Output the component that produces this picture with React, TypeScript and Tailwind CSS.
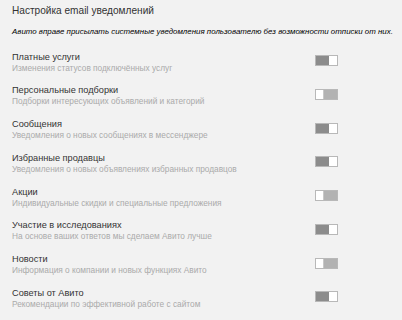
import React from "react";

const rows: { t: string; s: string; on: boolean }[] = [
  { t: "Платные услуги", s: "Изменения статусов подключённых услуг", on: true },
  { t: "Персональные подборки", s: "Подборки интересующих объявлений и категорий", on: false },
  { t: "Сообщения", s: "Уведомления о новых сообщениях в мессенджере", on: true },
  { t: "Избранные продавцы", s: "Уведомления о новых объявлениях избранных продавцов", on: true },
  { t: "Акции", s: "Индивидуальные скидки и специальные предложения", on: false },
  { t: "Участие в исследованиях", s: "На основе ваших ответов мы сделаем Авито лучше", on: true },
  { t: "Новости", s: "Информация о компании и новых функциях Авито", on: false },
  { t: "Советы от Авито", s: "Рекомендации по эффективной работе с сайтом", on: true },
];

function Toggle({ on }: { on: boolean }) {
  return (
    <div className="flex h-[11px] w-[23px] border border-[#b8b8b8] bg-white">
      {on ? (
        <>
          <div className="h-full w-[13px] bg-[#8c8c8c]" />
          <div className="h-full flex-1 bg-white" />
        </>
      ) : (
        <>
          <div className="h-full w-[8px] bg-white border-r border-[#c8c8c8]" />
          <div className="h-full flex-1 bg-[#b2b2b2]" />
        </>
      )}
    </div>
  );
}

export default function App() {
  return (
    <div
      className="h-[320px] w-[402px] overflow-hidden bg-[#f2f2f2] pl-[12px] pt-[4px]"
      style={{ fontFamily: '"Liberation Sans", Arial, sans-serif' }}
    >
      <div className="whitespace-nowrap text-[10.1px] leading-[14px] text-[#333]">Настройка email уведомлений</div>
      <div className="mt-[9px] whitespace-nowrap text-[7.9px] italic leading-[10px] text-black">
        Авито вправе присылать системные уведомления пользователю без возможности отписки от них.
      </div>
      <div className="mt-[14.5px] flex flex-col">
        {rows.map((r) => (
          <div key={r.t} className="flex h-[33.75px] items-start">
            <div className="w-[303px]">
              <div className="whitespace-nowrap text-[9.2px] leading-[11px] text-[#333]">{r.t}</div>
              <div className="whitespace-nowrap text-[8.3px] leading-[11px] text-[#aaaaaa]">{r.s}</div>
            </div>
            <div className="mt-[3.5px]">
              <Toggle on={r.on} />
            </div>
          </div>
        ))}
      </div>
    </div>
  );
}
